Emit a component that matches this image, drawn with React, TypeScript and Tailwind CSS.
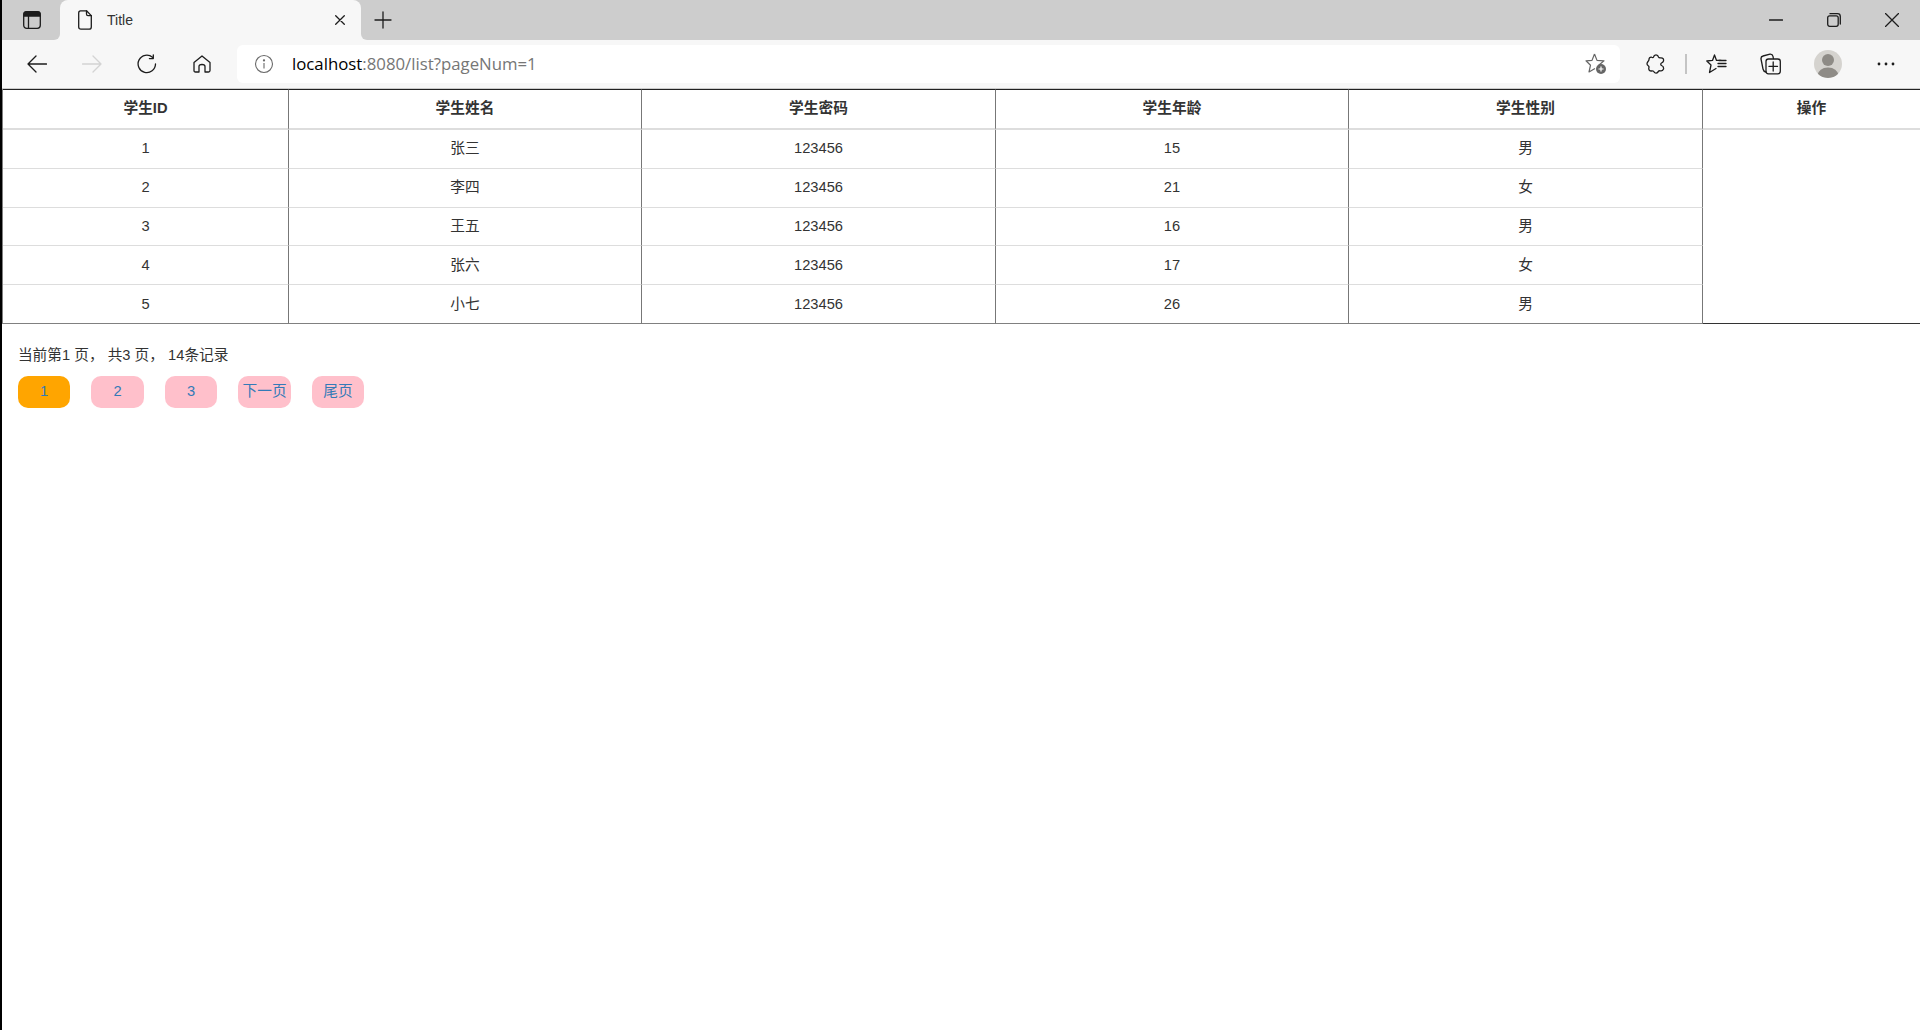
import React from "react";

const rows = [
  ["1", "张三", "123456", "15", "男"],
  ["2", "李四", "123456", "21", "女"],
  ["3", "王五", "123456", "16", "男"],
  ["4", "张六", "123456", "17", "女"],
  ["5", "小七", "123456", "26", "男"],
];
const heads = ["学生ID", "学生姓名", "学生密码", "学生年龄", "学生性别", "操作"];
const pages = ["1", "2", "3", "下一页", "尾页"];
const font = { fontFamily: '"Liberation Sans", "Noto Sans CJK SC", sans-serif' };

function Ico({ w, h, children, className = "" }: { w: number; h: number; children: React.ReactNode; className?: string }) {
  return (
    <svg width={w} height={h} viewBox={`0 0 ${w} ${h}`} fill="none" stroke="#1c1c1c" strokeWidth="1.3" strokeLinecap="round" strokeLinejoin="round" className={`shrink-0 ${className}`}>
      {children}
    </svg>
  );
}

export default function App() {
  return (
    <div className="h-screen overflow-hidden border-l-2 border-black bg-white" style={font}>
      {/* tab strip */}
      <div className="flex h-10 bg-[#cdcdcd]">
        <div className="w-[58px] shrink-0 bg-[#f7f7f7]">
          <div className="flex h-full items-center rounded-br-md bg-[#cdcdcd] pl-[21px]">
            <Ico w={18} h={18}>
              <rect x="0.7" y="0.7" width="16.6" height="16.6" rx="3" />
              <path d="M1 2.5 Q1 1 3 1 H15 Q17 1 17 2.5 V5 H1 Z" fill="#1c1c1c" />
              <path d="M5.5 5 V17" />
            </Ico>
          </div>
        </div>
        <div className="flex w-[301px] shrink-0 items-center rounded-t-lg bg-[#f7f7f7] pl-[18px] pr-[16px]">
          <Ico w={14} h={20}>
            <path d="M2.5 0.8 H8.5 L13.3 5.6 V17 Q13.3 19.2 11 19.2 H3 Q0.7 19.2 0.7 17 V3 Q0.7 0.8 2.5 0.8 Z" />
            <path d="M8.5 0.8 V4 Q8.5 5.6 10 5.6 H13.3" />
          </Ico>
          <span className="ml-[15px] text-[14px] text-[#333]">Title</span>
          <Ico w={10} h={10} className="ml-auto">
            <path d="M0.7 0.7 L9.3 9.3 M9.3 0.7 L0.7 9.3" />
          </Ico>
        </div>
        <div className="flex-1 bg-[#f7f7f7]">
          <div className="flex h-full items-center rounded-bl-md bg-[#cdcdcd] pl-[13px]">
            <Ico w={18} h={18}>
              <path d="M9 1 V17 M1 9 H17" />
            </Ico>
            <Ico w={14} h={2} className="ml-auto mr-[44px]">
              <path d="M0.5 1 H13.5" />
            </Ico>
            <Ico w={14} h={14} className="mr-[44px]">
              <rect x="0.7" y="2.8" width="10.5" height="10.5" rx="2" />
              <path d="M3 0.7 H10.5 Q13.3 0.7 13.3 3.5 V11" />
            </Ico>
            <Ico w={14} h={14} className="mr-[21px]">
              <path d="M0.5 0.5 L13.5 13.5 M13.5 0.5 L0.5 13.5" />
            </Ico>
          </div>
        </div>
      </div>

      {/* toolbar */}
      <div className="flex h-12 items-center bg-[#f7f7f7] pl-[25px]">
        <Ico w={20} h={18}>
          <path d="M19.5 9 H1 M9 1 L1 9 L9 17" />
        </Ico>
        <svg width="20" height="18" viewBox="0 0 20 18" fill="none" stroke="#d4d4d4" strokeWidth="1.3" strokeLinecap="round" strokeLinejoin="round" className="ml-[35px] shrink-0">
          <path d="M0.5 9 H19 M11 1 L19 9 L11 17" />
        </svg>
        <Ico w={20} h={20} className="ml-[35px]">
          <path d="M18.5 10 A8.7 8.7 0 1 1 15.5 3.3" />
          <path d="M16.3 0.8 V4.6 H12.4" />
        </Ico>
        <Ico w={18} h={18} className="ml-[36px]">
          <path d="M1 7.5 L9 1 L17 7.5 V15.5 Q17 17 15.5 17 H12 V11.5 Q12 9.5 9 9.5 Q6 9.5 6 11.5 V17 H2.5 Q1 17 1 15.5 Z" />
        </Ico>
        <div className="ml-[26px] flex h-[38px] w-[1383px] items-center rounded-md bg-white pl-[17px]">
          <svg width="20" height="20" viewBox="0 0 20 20" fill="none" stroke="#6a6a6a" strokeWidth="1.1" className="shrink-0">
            <circle cx="10" cy="10" r="8.5" />
            <path d="M10 9 V14.5" />
            <circle cx="10" cy="6.4" r="0.6" fill="#6a6a6a" />
          </svg>
          <span className="ml-[18px] text-[16.8px] text-[#767676]" style={{ fontFamily: '"Open Sans", sans-serif' }}>
            <span className="text-black">localhost</span>:8080/list?pageNum=1
          </span>
          <svg width="22" height="22" viewBox="0 0 22 22" fill="none" stroke="#666" strokeWidth="1.2" strokeLinejoin="round" className="ml-auto mr-[13px] shrink-0">
            <path d="M9.5 1 L12 7.4 L19 7.8 L13.7 12.2 M9.5 1 L7 7.4 L1 7.8 L5.5 12.2 L4 19 L10 15.5" />
            <circle cx="16" cy="16" r="5" fill="#666" stroke="none" />
            <path d="M16 13.5 V18.5 M13.5 16 H18.5" stroke="#fff" />
          </svg>
        </div>
        <Ico w={20} h={20} className="ml-[26px]">
          <path d="M7.5 3 Q8 0.8 10 0.8 Q12 0.8 12.5 3 Q13 4.2 15 3.8 Q18 3.8 17.5 7 Q17 8.5 15.5 9 Q14 10 15.5 11.5 Q18 12.5 17.5 15 Q16.5 17.5 14 16.8 Q12.5 16.5 12 18 Q10.5 20 8.5 18.5 Q7.5 16.5 5.5 17 Q2.5 17 2.8 14 Q3.5 12.5 2 11.5 Q0 10 2 7.5 Q3 6.5 3 5.5 Q3 3 5.5 3.2 Q7 4 7.5 3 Z" />
        </Ico>
        <div className="ml-[19px] h-5 w-[2px] shrink-0 bg-[#c4c4c4]" />
        <Ico w={21} h={20} className="ml-[19px]">
          <path d="M8.5 1 L10.5 6.4 H15 M8.5 1 L6.5 6.4 L0.8 7 L5 11 L3.5 18.5 L10 14.5" />
          <path d="M12 9.5 H20 M12 12.5 H20 M13 6.5 H20" />
        </Ico>
        <Ico w={21} h={22} className="ml-[33px]">
          <path d="M6 19 Q3.5 18.5 3 16 L1 6 Q0.7 3.5 3 3 L10 1.2 Q12.5 1 13 3.3 L13.4 5.5" />
          <rect x="6" y="6" width="14.3" height="14.8" rx="2.5" />
          <path d="M13.2 9 V18 M9 13.4 H17.5" />
        </Ico>
        <div className="ml-[33px] relative h-7 w-7 shrink-0 overflow-hidden rounded-full bg-[#d5d3cf]">
          <svg width="28" height="28" viewBox="0 0 28 28" fill="#8e8b86">
            <circle cx="14" cy="10" r="6" />
            <path d="M3 26 Q5 17.5 14 17.5 Q23 17.5 25 26 Q20 28 14 28 Q8 28 3 26 Z" />
          </svg>
        </div>
        <svg width="18" height="4" viewBox="0 0 18 4" fill="#1c1c1c" className="ml-[35px] shrink-0">
          <circle cx="2" cy="2" r="1.4" />
          <circle cx="9" cy="2" r="1.4" />
          <circle cx="16" cy="2" r="1.4" />
        </svg>
      </div>

      {/* table */}
      <div className="h-[1px] bg-[#cccccc]" />
      <table className="w-[1918px] table-fixed border-separate border-spacing-0 border-l border-l-[#808080] text-[14.7px] text-[#333]">
        <colgroup>
          <col className="w-[286px]" />
          <col className="w-[353px]" />
          <col className="w-[354px]" />
          <col className="w-[353px]" />
          <col className="w-[354px]" />
          <col />
        </colgroup>
        <thead>
          <tr>
            {heads.map((h, i) => (
              <th key={h} className={`h-[41px] border-t border-b-2 border-t-[#222] border-b-[#ddd] pb-[2px] text-center font-bold ${i < 5 ? "border-r border-r-[#777]" : ""}`}>
                {h}
              </th>
            ))}
          </tr>
        </thead>
        <tbody>
          {rows.map((r, ri) => (
            <tr key={r[0]}>
              {r.map((c, ci) => (
                <td key={ci} className={`h-[38.8px] border-r border-b border-r-[#777] px-0 pt-0 text-center font-normal ${ri < 2 ? "pb-[2px]" : "pb-0"} ${ri === 4 ? "border-b-[#808080]" : "border-b-[#ddd]"}`}>
                  {c}
                </td>
              ))}
              {ri === 0 && <td rowSpan={5} className="border-b border-b-[#333]" />}
            </tr>
          ))}
        </tbody>
      </table>

      {/* pagination */}
      <div className="pl-[15.9px] pt-[21px] text-[14.7px] text-[#333]">
        <div className="leading-5">当前第1&nbsp;页， 共3&nbsp;页， 14条记录</div>
        <div className="mt-[11px] flex gap-[21.1px]">
          {pages.map((p, i) => (
            <a key={p} className={`flex h-8 w-[52.4px] items-center justify-center whitespace-nowrap rounded-[10px] pb-[2px] text-[#337ab7] ${i === 0 ? "bg-[#ffa500]" : "bg-[#ffc0cb]"}`}>
              {p}
            </a>
          ))}
        </div>
      </div>
    </div>
  );
}
